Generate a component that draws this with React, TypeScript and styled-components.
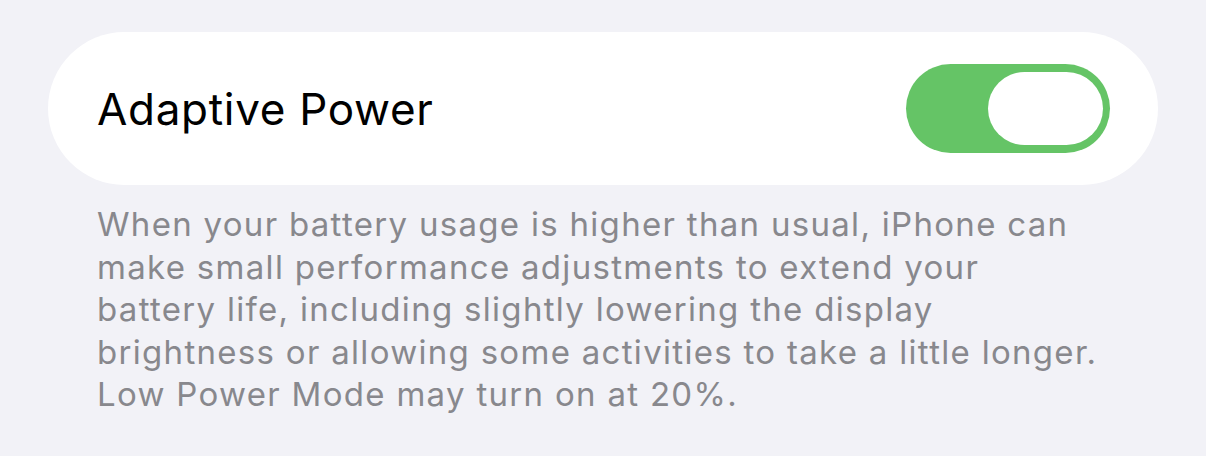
import React, { useState } from 'react'
import styled, { createGlobalStyle } from 'styled-components'

const GlobalStyle = createGlobalStyle`
  html, body {
    margin: 0;
    padding: 0;
    background: #f2f2f7;
  }
  body {
    font-family: Inter, "Noto Sans", sans-serif;
    -webkit-font-smoothing: antialiased;
  }
`

const Page = styled.div`
  width: 1206px;
  height: 456px;
  padding: 32px 48px 0;
  box-sizing: border-box;
  overflow: hidden;
`

const Group = styled.div`
  display: flex;
  align-items: center;
  justify-content: space-between;
  height: 153px;
  padding: 0 48px 0 49px;
  background: #ffffff;
  border-radius: 77px;
`

const Label = styled.span`
  font-size: 44px;
  color: #000;
  letter-spacing: 0.7px;
`

const Track = styled.button<{ $on: boolean }>`
  position: relative;
  width: 204px;
  height: 89px;
  padding: 0;
  border: 0;
  border-radius: 45px;
  background: ${({ $on }) => ($on ? '#65c466' : '#e9e9ea')};
  cursor: pointer;
  transition: background .2s ease;
`

const Knob = styled.span<{ $on: boolean }>`
  position: absolute;
  top: 8px;
  left: ${({ $on }) => ($on ? '82px' : '8px')};
  width: 115px;
  height: 73px;
  border-radius: 37px;
  background: #fff;
  transition: left .2s ease;
`

const Footer = styled.p`
  margin: 18px 0 0;
  padding: 0 49px;
  font-size: 33px;
  line-height: 42.5px;
  letter-spacing: 1.3px;
  color: #88888d;
`

const Switch: React.FC<{ on: boolean; onToggle: () => void }> = ({ on, onToggle }) => (
  <Track $on={on} onClick={onToggle} aria-pressed={on}>
    <Knob $on={on} />
  </Track>
)

const App: React.FC = () => {
  const [adaptive, setAdaptive] = useState(true)

  return (
    <>
      <GlobalStyle />
      <Page>
        <Group>
          <Label>Adaptive Power</Label>
          <Switch on={adaptive} onToggle={() => setAdaptive(v => !v)} />
        </Group>
        <Footer>
          When your battery usage is higher than usual, iPhone can<br />
          make small performance adjustments to extend your<br />
          battery life, including slightly lowering the display<br />
          brightness or allowing some activities to take a little longer.<br />
          Low Power Mode may turn on at 20%.
        </Footer>
      </Page>
    </>
  )
}

export default App
